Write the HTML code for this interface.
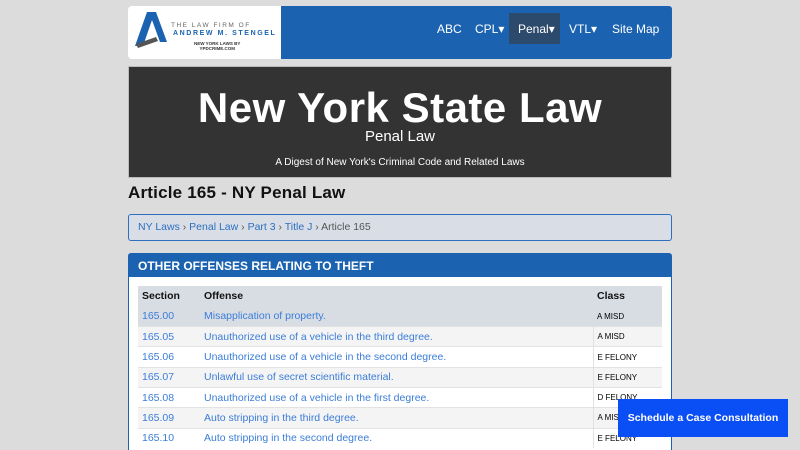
<!DOCTYPE html>
<html><head><style>
*{margin:0;padding:0;box-sizing:border-box}
html,body{width:800px;height:450px;overflow:hidden}
body{background:#dcdcdc;font-family:"Liberation Sans",sans-serif;position:relative}
.nav{position:absolute;left:128px;top:6px;width:544px;height:53px;background:#1b63b0;border-radius:3px}
.logo{position:absolute;left:0;top:0;width:153px;height:53px;background:#fff;border-radius:3px 0 0 3px}
.nav a{position:absolute;top:0;height:53px;line-height:46px;color:#fff;font-size:12px}
.hero{position:absolute;left:128px;top:66px;width:544px;height:112px;background:#333;border:1px solid #bbb;color:#fff;text-align:center}
h1{position:absolute;left:128px;top:183px;font-size:17px;font-weight:bold;color:#111;letter-spacing:0.2px}
.bc{position:absolute;left:128px;top:214px;width:544px;height:27px;border:1px solid #2d6fc0;border-radius:3px;background:#d9dee6;font-size:10.5px;line-height:25px;padding-left:9px;color:#555}
.bc span{color:#2d6fc0}
.panel{position:absolute;left:128px;top:253px;width:544px;height:210px;border:1px solid #1b63b0;border-radius:3px;background:#fff}
.ph{height:23px;background:#1b63b0;color:#fff;font-weight:bold;font-size:12px;line-height:25px;padding-left:9px}
table{position:absolute;left:9px;top:32px;width:524px;border-collapse:collapse;font-size:10.5px}
td{height:20.3px;padding-left:4px;border-top:1px solid #e2e2e2}
td.c{border-left:1px solid #e2e2e2;font-size:8px}
td a{color:#3b7dd8}
tr.h td{background:#d8dde4;border:none;color:#111;font-weight:bold;font-size:10.5px}
tr.g td{background:#d8dde4;border:none}
tr:nth-child(odd):not(.h):not(.g) td{background:#f4f4f4}
.btn{position:absolute;left:618px;top:399px;width:170px;height:38px;background:#0a4ef5;color:#fff;font-weight:bold;font-size:10.5px;line-height:38px;text-align:center}
</style></head><body>
<div class="nav">
<div class="logo">
<svg width="42" height="42" style="position:absolute;left:5px;top:5px" viewBox="0 0 42 42"><path d="M14 1h9l11 30h-7L19 9 10 35H2z" fill="#1b63b0"/><path d="M3 33l20-7 2 4-20 7z" fill="#555"/></svg>
<div style="position:absolute;left:43px;top:16px;font-size:6.5px;letter-spacing:1.5px;color:#666">THE LAW FIRM OF</div>
<div style="position:absolute;left:45px;top:24px;font-size:7px;letter-spacing:1.6px;color:#1b63b0;font-weight:bold">ANDREW M. STENGEL</div>
<div style="position:absolute;left:66px;top:35px;font-size:4.5px;color:#333;font-weight:bold;line-height:5px;text-align:center">NEW YORK LAWS BY<br>YPDCRIME.COM</div>
</div>
<a style="left:309px">ABC</a>
<a style="left:347px">CPL▾</a>
<div style="position:absolute;left:381px;top:7px;width:51px;height:31px;background:#2c4a6c"></div>
<a style="left:390px">Penal▾</a>
<a style="left:441px">VTL▾</a>
<a style="left:484px">Site Map</a>
</div>
<div class="hero">
<div style="font-size:42px;font-weight:bold;margin-top:19px;line-height:44px;letter-spacing:0.5px">New York State Law</div>
<div style="font-size:15px;line-height:14px">Penal Law</div>
<div style="font-size:10px;margin-top:13px">A Digest of New York's Criminal Code and Related Laws</div>
</div>
<h1>Article 165 - NY Penal Law</h1>
<div class="bc"><span>NY Laws</span> › <span>Penal Law</span> › <span>Part 3</span> › <span>Title J</span> › Article 165</div>
<div class="panel"><div class="ph">OTHER OFFENSES RELATING TO THEFT</div>
<table>
<tr class="h"><td style="width:62px">Section</td><td>Offense</td><td style="width:69px">Class</td></tr>
<tr class="g"><td><a>165.00</a></td><td><a>Misapplication of property.</a></td><td class="c" style="border:none">A MISD</td></tr>
<tr><td><a>165.05</a></td><td><a>Unauthorized use of a vehicle in the third degree.</a></td><td class="c">A MISD</td></tr>
<tr><td><a>165.06</a></td><td><a>Unauthorized use of a vehicle in the second degree.</a></td><td class="c">E FELONY</td></tr>
<tr><td><a>165.07</a></td><td><a>Unlawful use of secret scientific material.</a></td><td class="c">E FELONY</td></tr>
<tr><td><a>165.08</a></td><td><a>Unauthorized use of a vehicle in the first degree.</a></td><td class="c">D FELONY</td></tr>
<tr><td><a>165.09</a></td><td><a>Auto stripping in the third degree.</a></td><td class="c">A MISD</td></tr>
<tr><td><a>165.10</a></td><td><a>Auto stripping in the second degree.</a></td><td class="c">E FELONY</td></tr>
</table></div>
<div class="btn">Schedule a Case Consultation</div>
</body></html>
